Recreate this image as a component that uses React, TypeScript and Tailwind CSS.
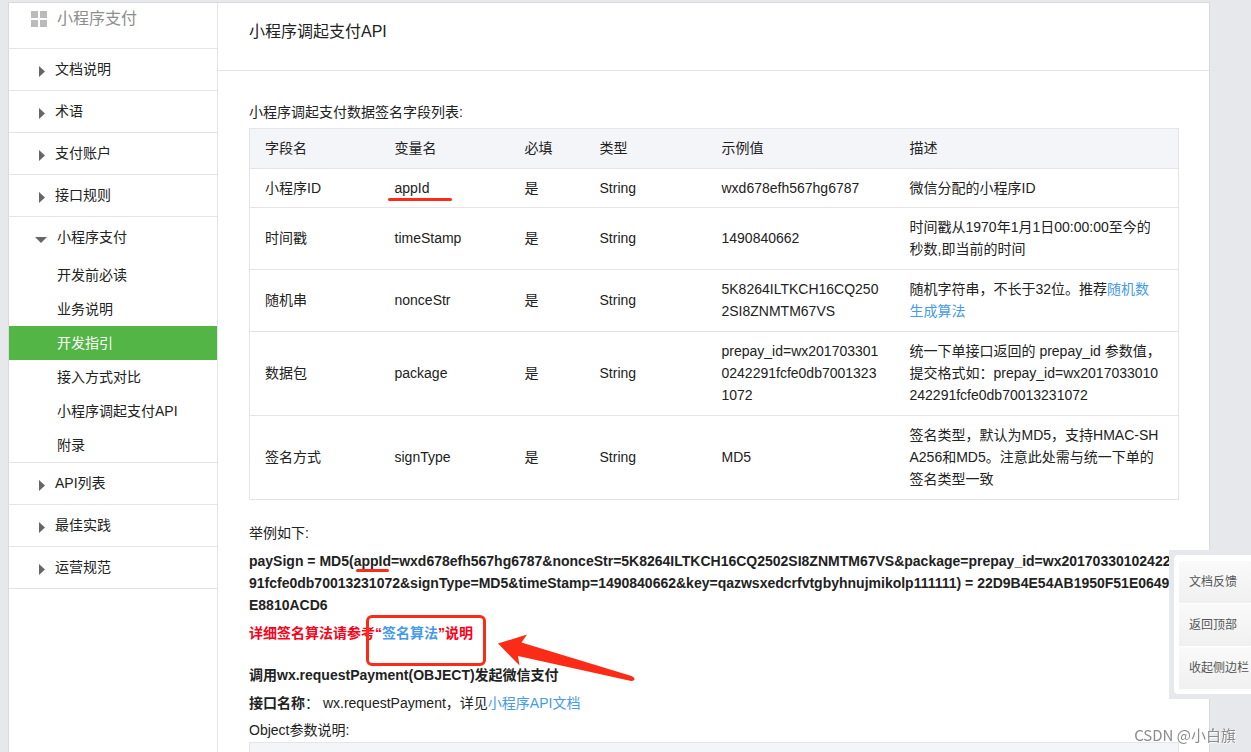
type Row = { name: string; variable: string; example: string; desc: React.ReactNode; height: string; marked?: boolean };

const topItems = ['文档说明', '术语', '支付账户', '接口规则'];
const subItems = ['开发前必读', '业务说明', '开发指引', '接入方式对比', '小程序调起支付API', '附录'];
const bottomItems = ['API列表', '最佳实践', '运营规范'];

const rows: Row[] = [
  { name: '小程序ID', variable: 'appId', example: 'wxd678efh567hg6787', desc: '微信分配的小程序ID', height: 'h-[39px]', marked: true },
  { name: '时间戳', variable: 'timeStamp', example: '1490840662', desc: '时间戳从1970年1月1日00:00:00至今的秒数,即当前的时间', height: 'h-[62px]' },
  {
    name: '随机串',
    variable: 'nonceStr',
    example: '5K8264ILTKCH16CQ2502SI8ZNMTM67VS',
    desc: <>随机字符串，不长于32位。推荐<a href="#random" className="text-[#459ae9]">随机数生成算法</a></>,
    height: 'h-[62px]',
  },
  {
    name: '数据包',
    variable: 'package',
    example: 'prepay_id=wx2017033010242291fcfe0db70013231072',
    desc: '统一下单接口返回的 prepay_id 参数值，提交格式如：prepay_id=wx2017033010242291fcfe0db70013231072',
    height: 'h-[84px]',
  },
  {
    name: '签名方式',
    variable: 'signType',
    example: 'MD5',
    desc: '签名类型，默认为MD5，支持HMAC-SHA256和MD5。注意此处需与统一下单的签名类型一致',
    height: 'h-[84px]',
  },
];

function MenuItem({ label }: { label: string }) {
  return (
    <li className="border-b border-[#e4e5e7]">
      <button className="flex h-[41px] w-full items-center gap-[10px] pb-[2px] pl-[30px] text-left">
        <svg width="6" height="11" viewBox="0 0 6 11" className="mt-[6px]"><path d="M0 0L6 5.5L0 11Z" fill="#666" /></svg>
        <span>{label}</span>
      </button>
    </li>
  );
}

function Sidebar() {
  return (
    <nav className="w-[209px] shrink-0 border-r border-[#e4e5e7]">
      <h2 className="flex h-[46px] items-start gap-[10px] border-b border-[#e4e5e7] pt-1 pl-[22px] text-base leading-6 text-[#8d8d8d]">
        <svg width="16" height="16" viewBox="0 0 16 16" className="mt-1" fill="#bbb">
          <path d="M0 0h7v7H0zM9 0h7v7H9zM0 9h7v7H0zM9 9h7v7H9z" />
        </svg>
        小程序支付
      </h2>
      <ul>
        {topItems.map((label) => <MenuItem key={label} label={label} />)}
        <li className="border-b border-[#e4e5e7]">
          <button className="flex h-[41px] w-full items-center gap-[10px] pb-[2px] pl-[26px] text-left">
            <svg width="12" height="6" viewBox="0 0 12 6" className="mt-[6px]"><path d="M0 0H12L6 6Z" fill="#666" /></svg>
            <span>小程序支付</span>
          </button>
          <ul>
            {subItems.map((label) => (
              <li key={label}>
                <a
                  href="#doc"
                  className={label === '开发指引' ? 'block bg-[#52b545] pl-12 leading-[34px] text-white' : 'block pl-12 leading-[34px]'}
                >
                  {label}
                </a>
              </li>
            ))}
          </ul>
        </li>
        {bottomItems.map((label) => <MenuItem key={label} label={label} />)}
      </ul>
    </nav>
  );
}

function FieldTable() {
  return (
    <table className="w-full table-fixed border-collapse border border-[#e4e5e7] text-left">
      <colgroup>
        <col className="w-[130px]" />
        <col className="w-[130px]" />
        <col className="w-[75px]" />
        <col className="w-[122px]" />
        <col className="w-[188px]" />
        <col />
      </colgroup>
      <thead>
        <tr className="h-10 bg-[#f4f5f9]">
          {['字段名', '变量名', '必填', '类型', '示例值', '描述'].map((h) => (
            <th key={h} className="px-[15px] pb-[2px] font-normal">{h}</th>
          ))}
        </tr>
      </thead>
      <tbody>
        {rows.map((r) => (
          <tr key={r.variable} className={`${r.height} border-t border-[#e4e5e7]`}>
            <td className="px-[15px] pb-px">{r.name}</td>
            <td className="px-[15px] pb-px">
              <span className="relative">
                {r.variable}
                {r.marked && <i className="absolute top-full -left-[7px] mt-[2px] h-[3px] w-16 rounded-full bg-[#fa2b17]" />}
              </span>
            </td>
            <td className="px-[15px] pb-px">是</td>
            <td className="px-[15px] pb-px">String</td>
            <td className="px-[15px] pb-px break-all">{r.example}</td>
            <td className="px-[15px] pb-px break-all">{r.desc}</td>
          </tr>
        ))}
      </tbody>
    </table>
  );
}

function SideTools() {
  return (
    <div className="fixed right-0 bottom-[53px] w-[82px] bg-[#e7e8eb] py-[5px] pl-[5px]">
      <div className="rounded-l bg-white py-[5px] pl-[5px]">
        {['文档反馈', '返回顶部', '收起侧边栏'].map((label) => (
          <button
            key={label}
            className="block h-[43px] w-full border-t border-white bg-linear-to-b from-[#fafafa] to-[#f0f0f0] pl-[10px] text-left text-xs whitespace-nowrap text-[#555]"
          >
            {label}
          </button>
        ))}
      </div>
    </div>
  );
}

export default function App() {
  return (
    <div className="h-screen overflow-hidden bg-[#e7e8eb] pt-[2px] pr-[41px] pl-2 font-['Liberation_Sans','Noto_Sans_CJK_SC',sans-serif] text-sm leading-[22px] text-[#222]">
      <div className="flex min-h-screen border border-[#d9dadc] bg-white">
        <Sidebar />
        <main className="min-w-0 flex-1">
          <h1 className="border-b border-[#e4e5e7] pt-[17px] pb-[26px] pl-[31px] text-base leading-6">小程序调起支付API</h1>
          <div className="pt-[30px] pr-[30px] pl-[31px]">
            <p className="mb-[5px]">小程序调起支付数据签名字段列表:</p>
            <FieldTable />
            <p className="mt-[22px] mb-[6px]">举例如下:</p>
            <p className="mb-[6px] pr-1 font-bold break-all">
              paySign = MD5(
              <span className="relative">
                appId
                <i className="absolute top-full left-[2px] h-[3px] w-[33px] rounded-full bg-[#fa2b17]" />
              </span>
              =wxd678efh567hg6787&amp;nonceStr=5K8264ILTKCH16CQ2502SI8ZNMTM67VS&amp;package=prepay_id=wx2017033010242291fcfe0db70013231072&amp;signType=MD5&amp;timeStamp=1490840662&amp;key=qazwsxedcrfvtgbyhnujmikolp111111) = 22D9B4E54AB1950F51E0649E8810ACD6
            </p>
            <p className="mb-5 font-bold text-[#fd0018]">
              详细签名算法请参考
              <span className="relative">
                “<a href="#sign" className="text-[#459ae9]">签名算法</a>”说明
                <i className="absolute -top-[10px] -left-[9px] h-[51px] w-[120px] rounded-md border-3 border-[#fa2b17]" />
                <svg width="138" height="48" viewBox="0 0 138 48" className="absolute top-[9px] left-full ml-6" fill="#fa2b17">
                  <path d="M1 9.5L30 0.5L24.500 8.500L134.500 42Q138 43.500 137.500 45.500Q136.500 47.500 133 46.700L21 22L22.500 31.500Z" />
                </svg>
              </span>
            </p>
            <p className="mb-[6px] font-bold">调用wx.requestPayment(OBJECT)发起微信支付</p>
            <p className="mb-[5px]">
              <b>接口名称</b>：&nbsp;wx.requestPayment，详见<a href="#api" className="text-[#459ae9]">小程序API文档</a>
            </p>
            <p className="mb-px">Object参数说明:</p>
            <div className="h-10 border border-[#e4e5e7] bg-[#f4f5f9]" />
          </div>
        </main>
      </div>
      <SideTools />
      <p className="fixed right-[15px] bottom-[6px] font-['Noto_Sans_CJK_SC',sans-serif] text-[15px] text-[#8c8c8c] [text-shadow:1px_1px_1px_white]">
        CSDN @小白旗
      </p>
    </div>
  );
}
